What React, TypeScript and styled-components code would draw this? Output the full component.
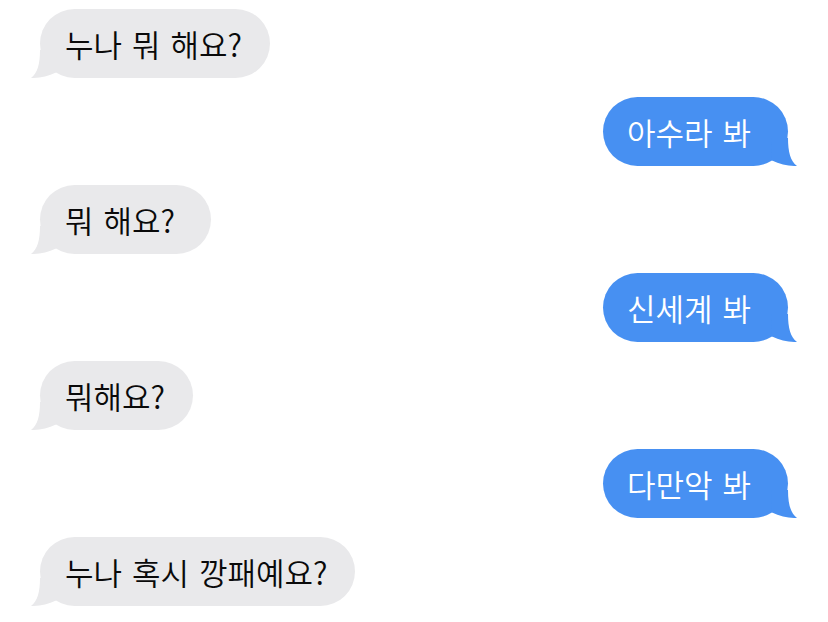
import React from 'react';
import styled, { createGlobalStyle, css } from 'styled-components';

const GlobalStyle = createGlobalStyle`
  html, body {
    margin: 0;
    background: #ffffff;
  }
  body {
    font-family: "Noto Sans CJK KR", "Noto Sans", sans-serif;
  }
`;

type Side = 'in' | 'out';

const GRAY = '#e9e9eb';
const BLUE = '#4790f2';

const Thread = styled.div`
  display: flex;
  flex-direction: column;
  gap: 19px;
  padding: 9px 40px 0 40px;
  width: 828px;
  box-sizing: border-box;
`;

const Row = styled.div<{ $side: Side }>`
  display: flex;
  justify-content: ${({ $side }) => ($side === 'out' ? 'flex-end' : 'flex-start')};
`;

const Bubble = styled.div<{ $side: Side; $extra?: number }>`
  position: relative;
  isolation: isolate;
  display: flex;
  align-items: center;
  height: 69px;
  border-radius: 35px;
  font-size: 31px;
  font-weight: 350;
  word-spacing: 3px;
  white-space: nowrap;

  ${({ $side, $extra = 0 }) =>
    $side === 'out'
      ? css`
          background: ${BLUE};
          color: #ffffff;
          padding: 0 37px 0 24px;
        `
      : css`
          background: ${GRAY};
          color: #0a0a0a;
          padding: 0 ${28 + $extra}px 0 25px;
        `}
`;

// the little hook under the bubble; the tip sits 9px outside the body
const Tail = styled.svg<{ $side: Side }>`
  position: absolute;
  bottom: 0;
  width: 26px;
  height: 28px;
  z-index: -1;

  ${({ $side }) =>
    $side === 'out'
      ? css`
          right: -9px;
          transform: scaleX(-1);
          fill: ${BLUE};
        `
      : css`
          left: -9px;
          fill: ${GRAY};
        `}
`;

const BubbleTail = ({ side }: { side: Side }) => (
  <Tail $side={side} viewBox="0 0 26 28">
    <path d="M9 0 C9 14 6.5 23 0 28 C8 28.3 17 26 25 22.4 L26 0 Z" />
  </Tail>
);

const messages: { side: Side; text: string; extra?: number }[] = [
  { side: 'in', text: '누나 뭐 해요?' },
  { side: 'out', text: '아수라 봐' },
  { side: 'in', text: '뭐 해요?', extra: 8 },
  { side: 'out', text: '신세계 봐' },
  { side: 'in', text: '뭐해요?' },
  { side: 'out', text: '다만악 봐' },
  { side: 'in', text: '누나 혹시 깡패예요?' },
];

const App = () => (
  <>
    <GlobalStyle />
    <Thread>
      {messages.map((m, i) => (
        <Row key={i} $side={m.side}>
          <Bubble $side={m.side} $extra={m.extra}>
            <BubbleTail side={m.side} />
            {m.text}
          </Bubble>
        </Row>
      ))}
    </Thread>
  </>
);

export default App;
